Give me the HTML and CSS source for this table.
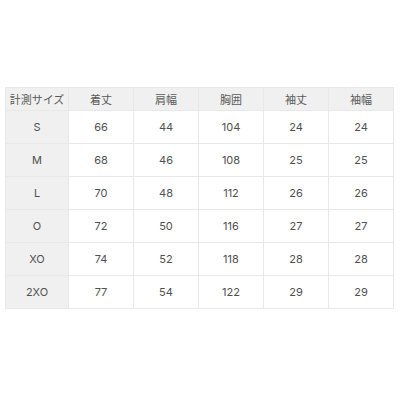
FILE: index.html
```html
<!DOCTYPE html>
<html lang="ja">
<head>
<meta charset="utf-8">
<link rel="stylesheet" href="styles.css">
</head>
<body>
<div class="page">
<table class="size-table">
<colgroup><col class="c-first"><col class="c"><col class="c"><col class="c"><col class="c"><col class="c"></colgroup>
<thead>
<tr><th>計測サイズ</th><th>着丈</th><th>肩幅</th><th>胸囲</th><th>袖丈</th><th>袖幅</th></tr>
</thead>
<tbody>
<tr><th>S</th><td>66</td><td>44</td><td>104</td><td>24</td><td>24</td></tr>
<tr><th>M</th><td>68</td><td>46</td><td>108</td><td>25</td><td>25</td></tr>
<tr><th>L</th><td>70</td><td>48</td><td>112</td><td>26</td><td>26</td></tr>
<tr><th>O</th><td>72</td><td>50</td><td>116</td><td>27</td><td>27</td></tr>
<tr><th>XO</th><td>74</td><td>52</td><td>118</td><td>28</td><td>28</td></tr>
<tr><th>2XO</th><td>77</td><td>54</td><td>122</td><td>29</td><td>29</td></tr>
</tbody>
</table>
</div>
</body>
</html>
```
FILE: styles.css
```css
html, body {
  margin: 0;
  padding: 0;
  background: #ffffff;
}
.page {
  padding: 87px 0 0 5px;
}
.size-table {
  border-collapse: collapse;
  table-layout: fixed;
  width: 388px;
  font-family: "Inter", "Noto Sans CJK JP", sans-serif;
  font-size: 11px;
  color: #505050;
}
.c-first { width: 63px; }
.c { width: 65px; }
.size-table th,
.size-table td {
  border: 1px solid #e8e8e8;
  text-align: center;
  vertical-align: middle;
  font-weight: 400;
  padding: 0;
}
.size-table thead th {
  height: 22px;
  background: #f0f0f0;
  color: #5a5a5a;
}
.size-table tbody th {
  background: #f0f0f0;
}
.size-table tbody th,
.size-table tbody td {
  height: 32px;
}
```
